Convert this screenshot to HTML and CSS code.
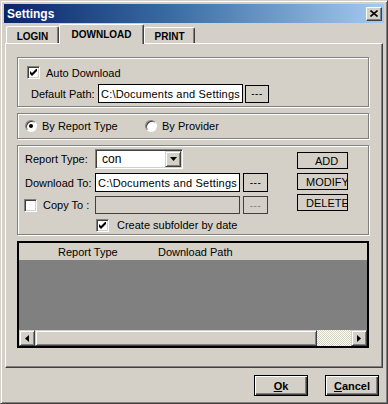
FILE: index.html
```html
<!DOCTYPE html>
<html lang="en">
  <head>
    <meta charset="UTF-8" />
    <title>Settings</title>
    <link rel="stylesheet" href="styles.css">
  </head>
  <body>
    <div class="window">
      <div class="titlebar">
        <span class="title">Settings</span>
        <button class="close-btn" type="button">
          <svg width="8" height="7" viewBox="0 0 8 7">
            <path d="M0.5 0.5L7.5 6.5M7.5 0.5L0.5 6.5" stroke="#000" stroke-width="1.6" fill="none" />
          </svg>
        </button>
      </div>

      <div class="tabs">
        <div class="tab tab-login">LOGIN</div>
        <div class="tab tab-download active">DOWNLOAD</div>
        <div class="tab tab-print">PRINT</div>
      </div>

      <div class="panel">
        <div class="group group-auto">
          <label class="check-row">
            <span class="checkbox">
              <svg width="7" height="7" viewBox="0 0 7 7"><path d="M0 2L2 4L6 0L7 0L7 2L2 7L0 5Z" fill="#000" /></svg>
            </span>
            Auto Download
          </label>
          <div class="path-row">
            <span class="path-label">Default Path:</span>
            <input class="field" type="text" value="C:\Documents and Settings\" />
            <button class="flat-btn browse" type="button">---</button>
          </div>
        </div>

        <div class="group group-mode">
          <label class="radio-row first">
            <span class="radio on"></span>
            By Report Type
          </label>
          <label class="radio-row">
            <span class="radio"></span>
            By Provider
          </label>
        </div>

        <div class="group group-rules">
          <span class="row-label">Report Type:</span>
          <div class="combo">
            <span class="combo-value">con</span>
            <span class="combo-btn">
              <svg width="7" height="4" viewBox="0 0 7 4"><path d="M0 0H7L3.5 4Z" fill="#000" /></svg>
            </span>
          </div>

          <div class="rule-buttons">
            <button class="flat-btn action" type="button"><span>ADD</span></button>
            <button class="flat-btn action" type="button"><span>MODIFY</span></button>
            <button class="flat-btn action" type="button"><span>DELETE</span></button>
          </div>

          <span class="row-label">Download To:</span>
          <input class="field" type="text" value="C:\Documents and Settings\" />
          <button class="flat-btn browse" type="button">---</button>

          <label class="row-label copy-label">
            <span class="checkbox empty"></span>
            Copy To :
          </label>
          <input class="field" type="text" value="" disabled />
          <button class="flat-btn browse" type="button" disabled>---</button>

          <label class="check-row subfolder">
            <span class="checkbox">
              <svg width="7" height="7" viewBox="0 0 7 7"><path d="M0 2L2 4L6 0L7 0L7 2L2 7L0 5Z" fill="#000" /></svg>
            </span>
            Create subfolder by date
          </label>
        </div>

        <div class="listview">
          <div class="list-header">
            <span class="col col-type">Report Type</span>
            <span class="col col-path">Download Path</span>
          </div>
          <div class="list-body"></div>
          <div class="hscroll">
            <span class="raised scroll-btn">
              <svg width="4" height="7" viewBox="0 0 4 7"><path d="M4 0V7L0 3.5Z" fill="#000" /></svg>
            </span>
            <span class="raised scroll-thumb"></span>
            <span class="scroll-track"></span>
            <span class="raised scroll-btn">
              <svg width="4" height="7" viewBox="0 0 4 7"><path d="M0 0V7L4 3.5Z" fill="#000" /></svg>
            </span>
          </div>
        </div>
      </div>

      <div class="footer">
        <button class="dlg-btn" type="button"><u>O</u>k</button>
        <button class="dlg-btn" type="button"><u>C</u>ancel</button>
      </div>
    </div>
  </body>
</html>
```

FILE: styles.css
```css
/* Classic dialog look */
*,
*::before,
*::after {
  box-sizing: border-box;
}

:root {
  --face: #d4d0c8;
  --shadow: #808080;
  --dark: #404040;
  --light: #ffffff;
}

body {
  margin: 0;
  background: var(--face);
  font-family: "Liberation Sans", Arial, sans-serif;
  font-size: 11px;
  color: #000;
}

button,
input {
  font-family: inherit;
  font-size: 11px;
  color: #000;
  margin: 0;
}

.window {
  width: 388px;
  height: 404px;
  display: flex;
  flex-direction: column;
  padding: 3px;
  background: var(--face);
  border: 1px solid;
  border-color: var(--face) var(--dark) var(--dark) var(--face);
  box-shadow: inset 1px 1px 0 var(--light), inset -1px -1px 0 var(--shadow);
}

/* Title bar */
.titlebar {
  height: 19px;
  flex: none;
  display: flex;
  align-items: center;
  justify-content: space-between;
  padding: 0 2px;
  background: linear-gradient(to right, #0a246a, #3a6ea5 45%, #a6caf0);
}

.title {
  margin-left: 1px;
  color: #fff;
  font-weight: bold;
  font-size: 12px;
}

.close-btn {
  width: 16px;
  height: 14px;
  padding: 0;
  display: flex;
  align-items: center;
  justify-content: center;
  background: var(--face);
  border: 1px solid;
  border-color: var(--light) var(--dark) var(--dark) var(--light);
  box-shadow: inset -1px -1px 0 var(--shadow);
}

/* Tabs */
.tabs {
  height: 20px;
  flex: none;
  display: flex;
  align-items: flex-end;
  padding-left: 2px;
}

.tab {
  height: 17px;
  display: flex;
  align-items: center;
  justify-content: center;
  padding-top: 2px;
  font-size: 10px;
  font-weight: bold;
  background: var(--face);
  border-top: 1px solid var(--light);
  border-left: 1px solid var(--light);
  border-right: 1px solid var(--dark);
  border-radius: 2px 2px 0 0;
  box-shadow: inset -1px 0 0 var(--shadow);
}

.tab-login {
  width: 53px;
}

.tab-download {
  width: 85px;
}

.tab-print {
  width: 51px;
  height: 16px;
}

.tab.active {
  position: relative;
  z-index: 1;
  height: 20px;
  margin-bottom: -1px;
  padding-top: 0;
  padding-bottom: 1px;
}

/* Tab page */
.panel {
  height: 325px;
  flex: none;
  display: flex;
  flex-direction: column;
  gap: 6px;
  margin: 0 1px;
  padding: 13px 13px 0 11px;
  border: 1px solid;
  border-color: var(--light) var(--dark) var(--dark) var(--light);
  box-shadow: inset -1px -1px 0 var(--shadow);
}

.group {
  flex: none;
  border: 1px solid var(--shadow);
  box-shadow: 1px 1px 0 var(--light), inset 1px 1px 0 var(--light);
}

/* Check boxes and radios */
.checkbox {
  width: 13px;
  height: 13px;
  flex: none;
  display: flex;
  align-items: center;
  justify-content: center;
  background: #fff;
  border: 1px solid;
  border-color: var(--shadow) var(--light) var(--light) var(--shadow);
  box-shadow: inset 1px 1px 0 var(--dark), inset -1px -1px 0 var(--face);
}

.check-row {
  display: flex;
  align-items: center;
  gap: 6px;
  height: 13px;
}

.radio {
  width: 12px;
  height: 12px;
  flex: none;
  display: flex;
  align-items: center;
  justify-content: center;
  border-radius: 50%;
  background: #fff;
  border: 1px solid;
  border-color: var(--shadow) var(--light) var(--light) var(--shadow);
  box-shadow: inset 1px 1px 0 var(--dark);
}

.radio.on::after {
  content: "";
  width: 4px;
  height: 4px;
  border-radius: 50%;
  background: #000;
}

.radio-row {
  display: flex;
  align-items: center;
  gap: 5px;
}

.radio-row.first {
  width: 120px;
}

/* Fields and buttons */
.field {
  height: 19px;
  padding: 0 2px;
  background: #fff;
  border: 1px solid #000;
  outline: none;
  letter-spacing: 0.2px;
}

.field:disabled {
  background: var(--face);
  border-color: var(--dark);
}

.flat-btn {
  padding: 0;
  background: var(--face);
  border: 1px solid #000;
  overflow: hidden;
}

.browse {
  width: 25px;
  height: 19px;
  font-size: 10px;
  letter-spacing: 0.5px;
}

.browse:disabled {
  color: var(--shadow);
  border-color: var(--dark);
}

.raised {
  background: var(--face);
  border: 1px solid;
  border-color: var(--face) var(--dark) var(--dark) var(--face);
  box-shadow: inset 1px 1px 0 var(--light), inset -1px -1px 0 var(--shadow);
}

/* Auto download group */
.group-auto {
  height: 50px;
  padding: 8px 0 0 9px;
}

.path-row {
  display: flex;
  align-items: center;
  margin: 5px 0 0 4px;
}

.path-label {
  width: 67px;
}

.path-row .field {
  width: 145px;
}

.path-row .browse {
  width: 24px;
  height: 18px;
  margin-left: 2px;
}

/* Mode group */
.group-mode {
  height: 26px;
  display: flex;
  align-items: center;
  padding-left: 7px;
}

/* Report rules group */
.group-rules {
  height: 90px;
  display: grid;
  grid-template-columns: 70px 145px 28px 80px;
  grid-template-rows: 20px 19px 18px 13px;
  row-gap: 4px;
  align-items: center;
  padding: 3px 0 0 7px;
}

.group-rules .row-label {
  grid-column: 1;
}

.group-rules .field,
.group-rules .combo {
  grid-column: 2;
  width: 145px;
}

.group-rules .combo {
  width: 88px;
}

.group-rules .browse {
  grid-column: 3;
  justify-self: end;
}

.row-label {
  display: flex;
  align-items: center;
  gap: 6px;
}

.copy-label {
  margin-left: -1px;
}

.combo {
  height: 20px;
  display: flex;
  align-items: center;
  justify-content: space-between;
  background: #fff;
  border: 1px solid;
  border-color: var(--shadow) var(--light) var(--light) var(--shadow);
  box-shadow: inset 1px 1px 0 var(--dark), inset -1px -1px 0 var(--face);
  padding: 1px;
}

.combo-value {
  padding-left: 5px;
  font-size: 12px;
}

.combo-btn {
  width: 16px;
  height: 16px;
  display: flex;
  align-items: center;
  justify-content: center;
  background: var(--face);
  border: 1px solid;
  border-color: var(--face) var(--dark) var(--dark) var(--face);
  box-shadow: inset 1px 1px 0 var(--light), inset -1px -1px 0 var(--shadow);
}

.group-rules .field:disabled,
.group-rules .browse:disabled {
  height: 18px;
}

.rule-buttons {
  grid-column: 4;
  grid-row: 1 / 4;
  justify-self: end;
  align-self: start;
  display: flex;
  flex-direction: column;
  gap: 4px;
  padding-top: 3px;
}

.action {
  width: 51px;
  height: 17px;
  display: flex;
  align-items: center;
  justify-content: safe center;
  padding: 0 0 0 8px;
  white-space: nowrap;
}

.action span {
  flex: none;
}

.subfolder {
  grid-column: 2 / 5;
  margin: 1px 0 0 1px;
  gap: 8px;
}

/* List view */
.listview {
  height: 107px;
  flex: none;
  display: flex;
  flex-direction: column;
  border: 2px solid #000;
  background: var(--shadow);
}

.list-header {
  height: 17px;
  flex: none;
  display: flex;
  align-items: center;
  background: var(--face);
}

.col-type {
  width: 139px;
  padding-left: 39px;
}

.list-body {
  flex: 1;
}

.hscroll {
  height: 16px;
  flex: none;
  display: flex;
}

.scroll-btn {
  width: 16px;
  display: flex;
  align-items: center;
  justify-content: center;
}

.scroll-thumb {
  flex: 1;
}

.scroll-track {
  width: 34px;
  background: repeating-conic-gradient(var(--face) 0 25%, #fff 0 50%) 0 0 / 2px 2px;
}

/* Footer */
.footer {
  flex: 1;
  display: flex;
  justify-content: flex-end;
  align-items: flex-start;
  gap: 17px;
  padding: 7px 5px 0 0;
}

.dlg-btn {
  width: 54px;
  height: 21px;
  padding: 0;
  font-weight: bold;
  background: var(--face);
  border: 1px solid #000;
  box-shadow: inset 1px 1px 0 var(--light), inset -1px -1px 0 var(--dark), inset -2px -2px 0 var(--shadow);
}
```
